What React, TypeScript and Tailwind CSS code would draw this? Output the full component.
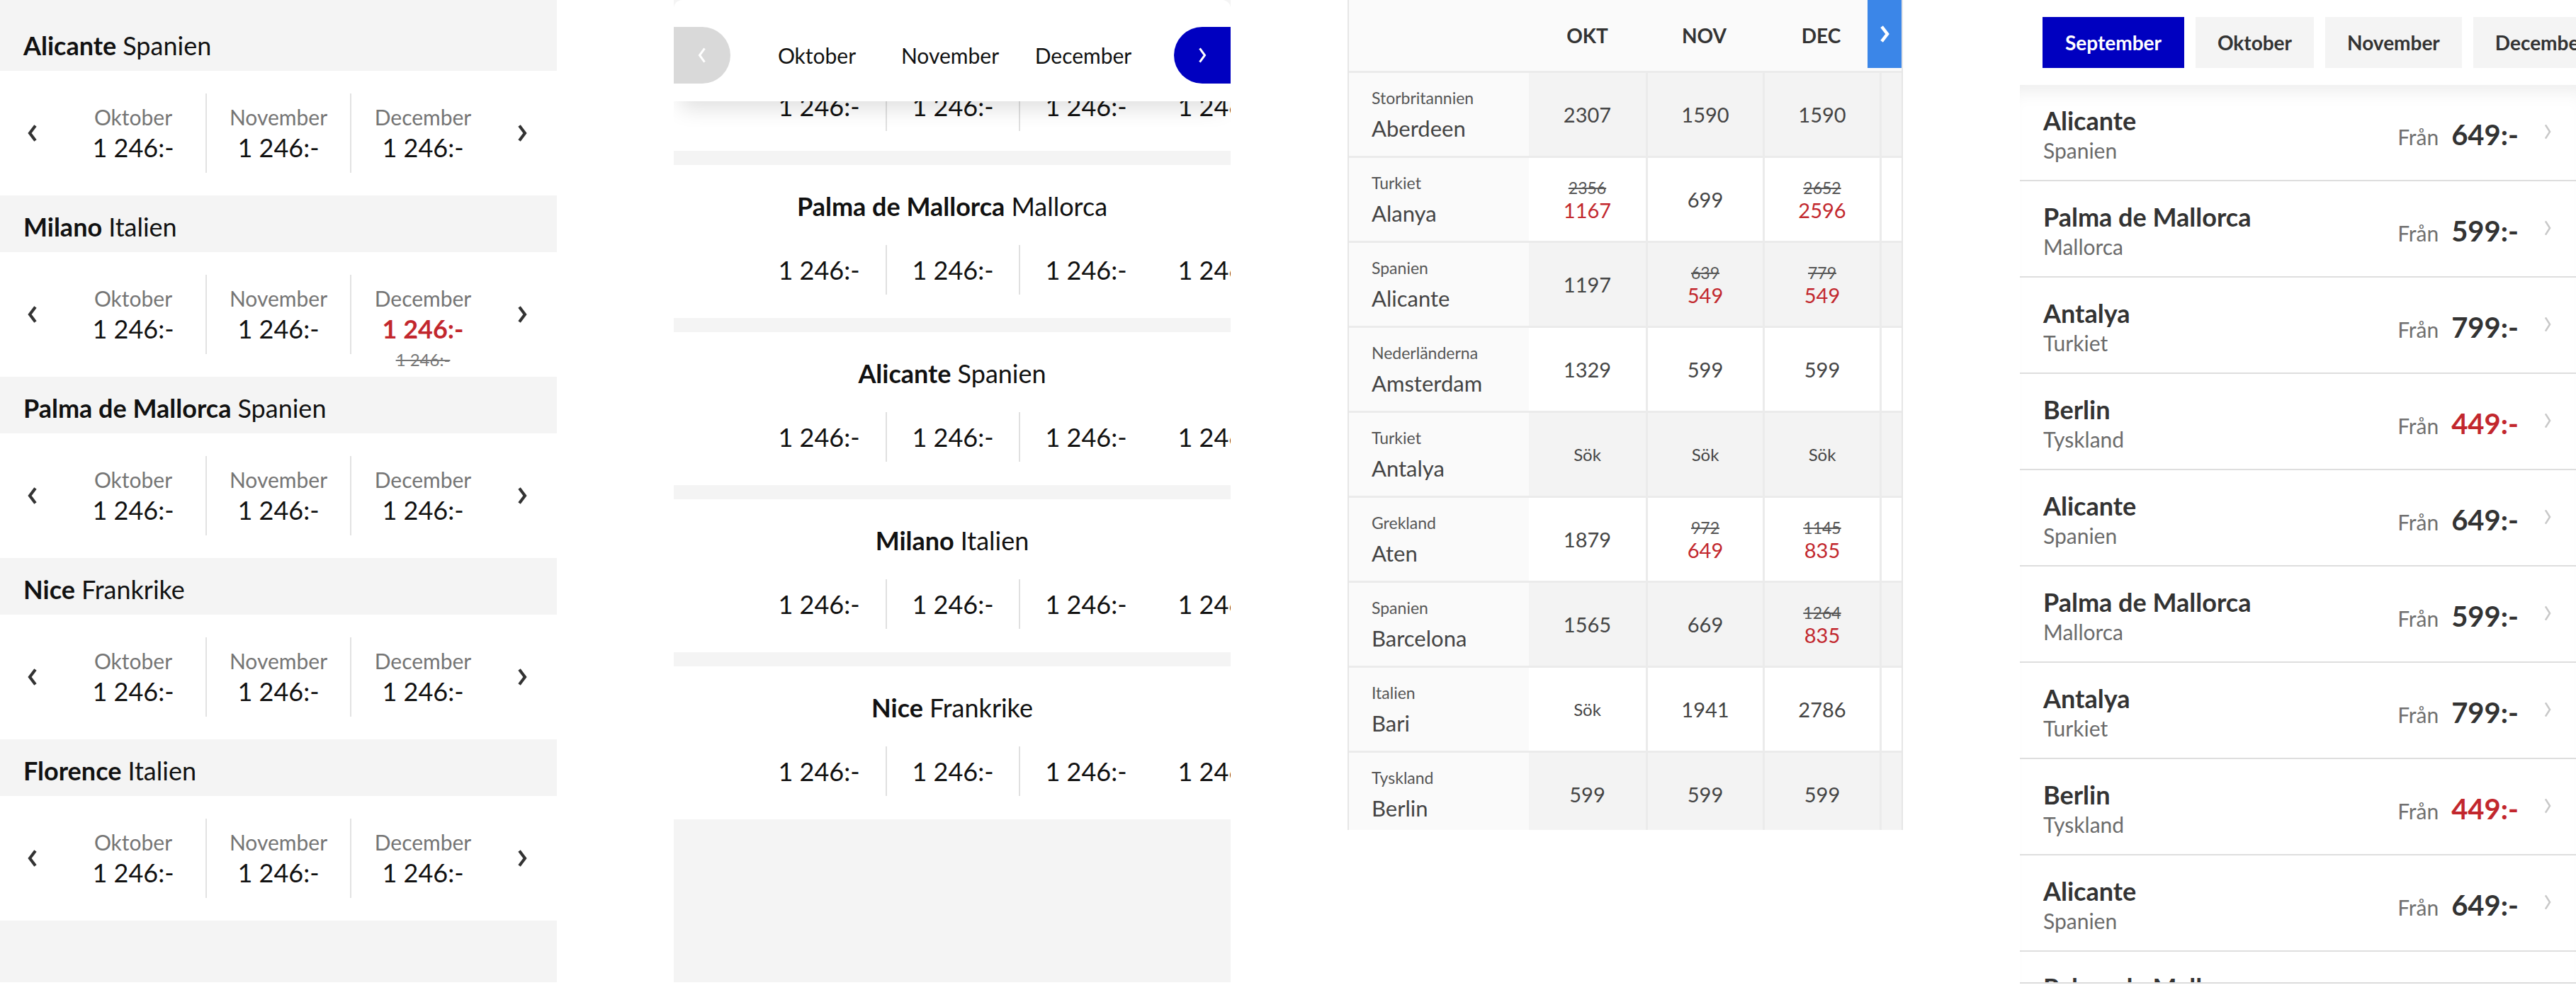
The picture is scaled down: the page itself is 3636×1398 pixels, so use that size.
import React from "react";

type ChevProps = { dir: "left" | "right"; w: number; h: number; stroke: number; color: string };
function Chev({ dir, w, h, stroke, color }: ChevProps) {
  const x1 = w * 0.28;
  const x2 = w * 0.72;
  const pts =
    dir === "right"
      ? `${x1},${h * 0.1} ${x2},${h * 0.5} ${x1},${h * 0.9}`
      : `${x2},${h * 0.1} ${x1},${h * 0.5} ${x2},${h * 0.9}`;
  return (
    <svg width={w} height={h} viewBox={`0 0 ${w} ${h}`}>
      <polyline points={pts} fill="none" stroke={color} strokeWidth={stroke} strokeLinejoin="miter" strokeLinecap="butt" />
    </svg>
  );
}

const P1 = [
  { city: "Alicante", country: "Spanien", sale: false },
  { city: "Milano", country: "Italien", sale: true },
  { city: "Palma de Mallorca", country: "Spanien", sale: false },
  { city: "Nice", country: "Frankrike", sale: false },
  { city: "Florence", country: "Italien", sale: false },
];

function Panel1() {
  return (
    <div className="w-[786px] h-[1387px] shrink-0 bg-[#f4f4f4] pt-[20px]">
      {P1.map((d) => (
        <div key={d.city}>
          <div className="h-[80px] flex items-center pl-[33px] pt-[8px] text-[36px] text-[#111] leading-[44px]">
            <span className="font-bold">{d.city}</span>
            <span className="ml-[9px]">{d.country}</span>
          </div>
          <div className="h-[176px] bg-white flex items-center">
            <div className="w-[86px] pl-[37px] flex items-center">
              <Chev dir="left" w={18} h={26} stroke={4.2} color="#333" />
            </div>
            {["Oktober", "November", "December"].map((m, i) => (
              <div
                key={m}
                className={
                  i === 0
                    ? "w-[204px] h-[112px] flex flex-col items-center pt-[13px]"
                    : "w-[204px] h-[112px] flex flex-col items-center pt-[13px] border-l-2 border-[#e2e2e2]"
                }
              >
                <div className="text-[30px] leading-[40px] text-[#757575]">{m}</div>
                {d.sale && i === 2 ? (
                  <>
                    <div className="text-[36px] leading-[46px] font-bold text-[#c2272d]">1 246:-</div>
                    <div className="text-[24px] leading-[42px] text-[#777] line-through">1 246:-</div>
                  </>
                ) : (
                  <div className="text-[36px] leading-[46px] text-[#111]">1 246:-</div>
                )}
              </div>
            ))}
            <div className="w-[88px] pl-[30px] flex items-center">
              <Chev dir="right" w={18} h={26} stroke={4.2} color="#333" />
            </div>
          </div>
        </div>
      ))}
    </div>
  );
}

function P2PriceRow() {
  return (
    <div className="h-[70px] flex pl-[111px]">
      <div className="w-[188px] shrink-0 flex items-center justify-center text-[36px] text-[#111]">1 246:-</div>
      <div className="w-[188px] shrink-0 flex items-center justify-center text-[36px] text-[#111] border-l-2 border-[#e0e0e0]">1 246:-</div>
      <div className="w-[188px] shrink-0 flex items-center justify-center text-[36px] text-[#111] border-l-2 border-[#e0e0e0]">1 246:-</div>
      <div className="w-[188px] shrink-0 flex items-center justify-center text-[36px] text-[#111]">1 246:-</div>
    </div>
  );
}

const P2 = [
  { city: "Palma de Mallorca", country: "Mallorca" },
  { city: "Alicante", country: "Spanien" },
  { city: "Milano", country: "Italien" },
  { city: "Nice", country: "Frankrike" },
];

function Panel2() {
  return (
    <div className="w-[786px] h-[1387px] shrink-0 bg-[#f4f4f4] flex flex-col overflow-hidden">
      <div className="h-[143px] shrink-0 bg-white rounded-t-[12px] relative z-10 shadow-[0_20px_30px_-10px_rgba(0,0,0,0.13)] pt-[38px] flex items-start">
        <div className="w-[80px] h-[80px] bg-[#d9d9d9] rounded-r-full flex items-center justify-center">
          <Chev dir="left" w={16} h={24} stroke={3} color="#ffffff" />
        </div>
        <div className="ml-[28px] flex">
          {["Oktober", "November", "December"].map((m) => (
            <div key={m} className="w-[188px] h-[80px] flex items-center justify-center text-[30px] text-[#111]">
              {m}
            </div>
          ))}
        </div>
        <div className="flex-1" />
        <div className="w-[80px] h-[80px] bg-[#0000c0] rounded-l-full flex items-center justify-center">
          <Chev dir="right" w={16} h={24} stroke={3} color="#ffffff" />
        </div>
      </div>
      <div className="h-[70px] shrink-0 bg-white overflow-hidden">
        <div className="-mt-[28px]">
          <P2PriceRow />
        </div>
      </div>
      <div className="flex flex-col gap-[20px] mt-[20px]">
        {P2.map((s) => (
          <div key={s.city} className="h-[216px] bg-white flex flex-col pt-[36px]">
            <div className="text-[36px] leading-[44px] text-[#111] text-center">
              <span className="font-bold">{s.city}</span>
              <span className="ml-[9px]">{s.country}</span>
            </div>
            <div className="mt-[33px]">
              <P2PriceRow />
            </div>
          </div>
        ))}
      </div>
    </div>
  );
}

type Cell = { v?: string; old?: string; now?: string; sok?: boolean };
const P3: { country: string; city: string; cells: Cell[] }[] = [
  { country: "Storbritannien", city: "Aberdeen", cells: [{ v: "2307" }, { v: "1590" }, { v: "1590" }] },
  { country: "Turkiet", city: "Alanya", cells: [{ old: "2356", now: "1167" }, { v: "699" }, { old: "2652", now: "2596" }] },
  { country: "Spanien", city: "Alicante", cells: [{ v: "1197" }, { old: "639", now: "549" }, { old: "779", now: "549" }] },
  { country: "Nederländerna", city: "Amsterdam", cells: [{ v: "1329" }, { v: "599" }, { v: "599" }] },
  { country: "Turkiet", city: "Antalya", cells: [{ sok: true }, { sok: true }, { sok: true }] },
  { country: "Grekland", city: "Aten", cells: [{ v: "1879" }, { old: "972", now: "649" }, { old: "1145", now: "835" }] },
  { country: "Spanien", city: "Barcelona", cells: [{ v: "1565" }, { v: "669" }, { old: "1264", now: "835" }] },
  { country: "Italien", city: "Bari", cells: [{ sok: true }, { v: "1941" }, { v: "2786" }] },
  { country: "Tyskland", city: "Berlin", cells: [{ v: "599" }, { v: "599" }, { v: "599" }] },
];

function CellContent({ c }: { c: Cell }) {
  if (c.sok) return <div className="text-[24px] text-[#444]">Sök</div>;
  if (c.old)
    return (
      <div className="flex flex-col items-center">
        <div className="text-[23px] leading-[30px] text-[#555] line-through">{c.old}</div>
        <div className="text-[29px] leading-[34px] text-[#c2272d]">{c.now}</div>
      </div>
    );
  return <div className="text-[29px] text-[#444]">{c.v}</div>;
}

function Panel3() {
  return (
    <div className="w-[784px] h-[1172px] shrink-0 overflow-hidden border-l-2 border-r-2 border-[#e6e6e6] bg-[#fafafa] relative">
      <div className="h-[100px] flex">
        <div className="w-[254px] shrink-0" />
        {["OKT", "NOV", "DEC", ""].map((m, i) => (
          <div key={i} className="w-[165px] shrink-0 flex items-center justify-center text-[28px] font-bold text-[#333]">
            {m}
          </div>
        ))}
      </div>
      {P3.map((r, i) => (
        <div key={r.city} className="h-[120px] flex border-t-[3px] border-[#ebebeb]">
          <div className="w-[254px] shrink-0 bg-[#fafafa] pl-[32px] flex flex-col justify-center">
            <div className="text-[23px] leading-[30px] text-[#555]">{r.country}</div>
            <div className="text-[31px] leading-[40px] text-[#444] mt-[8px]">{r.city}</div>
          </div>
          {[...r.cells, {} as Cell].map((c, j) => (
            <div
              key={j}
              className={
                (j === 0 ? "" : "border-l-[3px] border-[#ebebeb] ") +
                (i % 2 === 0 ? "bg-[#f3f3f3] " : "bg-white ") +
                "w-[165px] shrink-0 flex items-center justify-center"
              }
            >
              {j < 3 ? <CellContent c={c} /> : null}
            </div>
          ))}
        </div>
      ))}
      <div className="absolute top-0 right-0 w-[48px] h-[96px] bg-[#3b86e8] flex items-center justify-center">
        <Chev dir="right" w={18} h={26} stroke={4.5} color="#ffffff" />
      </div>
    </div>
  );
}

const P4 = [
  { city: "Alicante", country: "Spanien", price: "649:-", red: false },
  { city: "Palma de Mallorca", country: "Mallorca", price: "599:-", red: false },
  { city: "Antalya", country: "Turkiet", price: "799:-", red: false },
  { city: "Berlin", country: "Tyskland", price: "449:-", red: true },
  { city: "Alicante", country: "Spanien", price: "649:-", red: false },
  { city: "Palma de Mallorca", country: "Mallorca", price: "599:-", red: false },
  { city: "Antalya", country: "Turkiet", price: "799:-", red: false },
  { city: "Berlin", country: "Tyskland", price: "449:-", red: true },
  { city: "Alicante", country: "Spanien", price: "649:-", red: false },
  { city: "Palma de Mallorca", country: "Mallorca", price: "599:-", red: false },
];

function Panel4() {
  return (
    <div className="flex-1 min-w-0 h-[1389px] overflow-hidden border-b-2 border-[#dcdcdc] flex flex-col">
      <div className="h-[120px] shrink-0 pt-[24px] pl-[32px] flex gap-[16px] overflow-hidden">
        <div className="h-[72px] shrink-0 px-[32px] bg-[#0000c0] text-white text-[28px] font-bold flex items-center">September</div>
        {["Oktober", "November", "December"].map((m) => (
          <div key={m} className="h-[72px] shrink-0 px-[31px] bg-[#f4f4f4] text-[#333] text-[28px] font-bold flex items-center">
            {m}
          </div>
        ))}
      </div>
      <div className="shadow-[inset_0_26px_26px_-18px_rgba(0,0,0,0.08)]">
        {P4.map((r, i) => (
          <div key={i} className="h-[136px] border-b-2 border-[#dedede] px-[33px] pt-[6px] flex items-center justify-between">
            <div className="flex flex-col">
              <div className="text-[36px] leading-[44px] font-bold text-[#333]">{r.city}</div>
              <div className="text-[30px] leading-[40px] text-[#6b6b6b]">{r.country}</div>
            </div>
            <div className="flex items-center">
              <div className="flex items-baseline gap-[18px]">
                <span className="text-[30px] text-[#707070]">Från</span>
                <span className={r.red ? "text-[40px] font-bold text-[#c2272d]" : "text-[40px] font-bold text-[#333]"}>{r.price}</span>
              </div>
              <div className="ml-[34px] -mt-[8px]">
                <Chev dir="right" w={14} h={24} stroke={2.5} color="#c8c8c8" />
              </div>
            </div>
          </div>
        ))}
      </div>
    </div>
  );
}

export default function App() {
  return (
    <div className="w-[3636px] h-[1398px] bg-white flex items-start gap-[165px] overflow-hidden font-['Lato',sans-serif]">
      <Panel1 />
      <Panel2 />
      <Panel3 />
      <Panel4 />
    </div>
  );
}
